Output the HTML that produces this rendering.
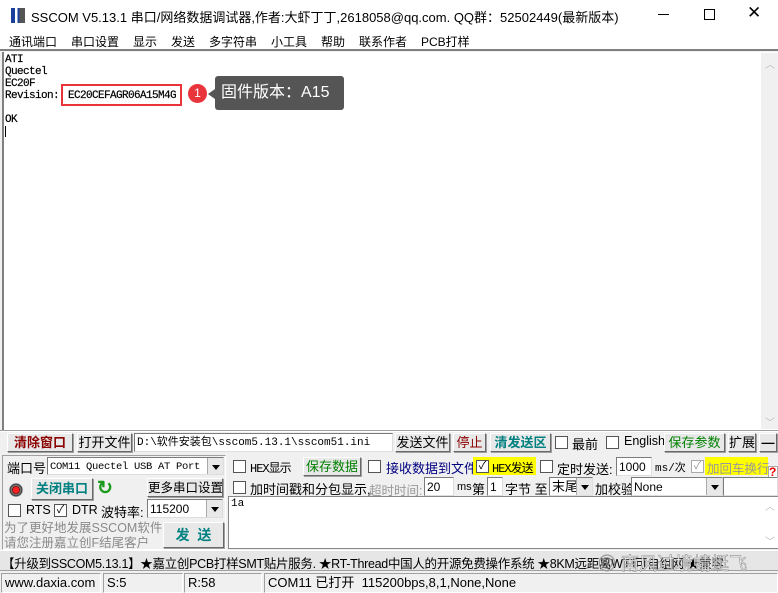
<!DOCTYPE html>
<html><head><meta charset="utf-8">
<style>
*{box-sizing:border-box;margin:0;padding:0}
body{width:778px;height:593px;background:#f0f0f0;position:relative;overflow:hidden;font-family:"Liberation Sans","Noto Sans CJK SC",sans-serif;font-size:12px;color:#000}
.a{position:absolute;white-space:nowrap}
.btn{position:absolute;background:#e8e8e8;border:1px solid #fff;border-right-color:#696969;border-bottom-color:#696969;box-shadow:1px 1px 0 #a0a0a0;text-align:center;font-size:13px;line-height:18px;white-space:nowrap;overflow:hidden}
.in{position:absolute;background:#fff;border:1px solid #7a7a7a;border-right-color:#ddd;border-bottom-color:#ddd;font-size:12px;line-height:18px;padding-left:2px;white-space:nowrap;overflow:hidden}
.cb{position:absolute;width:13px;height:13px;background:#fff;border:1px solid #555;font-size:11px;line-height:10px;text-align:center}
.dd{position:absolute;width:16px;background:#e8e8e8;border-left:1px solid #aaa;right:0;top:0;bottom:0}
.dd:after{content:"";position:absolute;left:4px;top:7px;border:4px solid transparent;border-top:5px solid #000}
.mono{font-family:"Liberation Mono","Noto Sans CJK SC",monospace}
.sb{position:absolute;background:#f0f0f0;border:1px solid #a0a0a0;border-right-color:#fff;border-bottom-color:#fff;font-size:13px;line-height:18px;padding-left:3px}
.m{position:absolute;top:33px;font-size:12px}
</style></head><body>
<div class="a" style="left:0;top:0;width:778px;height:30px;background:#fff"></div>
<div class="a" style="left:11px;top:8px;width:14px;height:15px;background:linear-gradient(90deg,#1a3f9c 0 30%,#fff 30% 45%,#1a3f9c 45% 60%,#555 60%)"></div>
<div class="a" style="left:31px;top:7px;font-size:13px">SSCOM V5.13.1 串口/网络数据调试器,作者:大虾丁丁,2618058@qq.com. QQ群：52502449(最新版本)</div>
<div class="a" style="left:658px;top:14px;width:11px;height:1px;background:#000"></div>
<div class="a" style="left:704px;top:9px;width:11px;height:11px;border:1px solid #000"></div>
<div class="a" style="left:747px;top:3px;font-size:17px">✕</div>
<div class="a" style="left:0;top:30px;width:778px;height:21px;background:#fff;border-bottom:2px solid #808080"></div>
<div class="m" style="left:9px">通讯端口</div><div class="m" style="left:71px">串口设置</div><div class="m" style="left:133px">显示</div><div class="m" style="left:171px">发送</div><div class="m" style="left:209px">多字符串</div><div class="m" style="left:271px">小工具</div><div class="m" style="left:321px">帮助</div><div class="m" style="left:359px">联系作者</div><div class="m" style="left:421px">PCB打样</div>
<div class="a" style="left:2px;top:52px;width:776px;height:378px;background:#fff;border-left:2px solid #808080"></div>
<div class="a" style="left:761px;top:53px;width:17px;height:376px;background:#f0f0f0"></div>
<div class="a" style="left:765px;top:56px;color:#bbb;font-size:10px">︿</div>
<div class="a" style="left:765px;top:414px;color:#bbb;font-size:10px">﹀</div>
<div class="a mono" style="left:5px;top:54px;font-size:11px;line-height:12px;letter-spacing:-0.6px;-webkit-text-stroke:0.2px #000">ATI<br>Quectel<br>EC20F<br>Revision: <span style="padding-left:3px">EC20CEFAGR06A15M4G</span><br><br>OK</div>
<div class="a" style="left:5px;top:126px;width:1px;height:11px;background:#000"></div>
<div class="a" style="left:61px;top:84px;width:121px;height:22px;border:2px solid #e8343a"></div>
<div class="a" style="left:188px;top:84px;width:19px;height:19px;border-radius:50%;background:#e8343a;color:#fff;font-size:12px;text-align:center;line-height:19px">1</div>
<div class="a" style="left:208px;top:89px;border:5px solid transparent;border-right:7px solid #555;border-left:0"></div>
<div class="a" style="left:215px;top:76px;width:129px;height:34px;background:#555;border-radius:3px;color:#fff;font-size:16px;line-height:34px;padding-left:6px">固件版本：A15</div>
<div class="a" style="left:0;top:430px;width:778px;height:2px;background:#fff;border-top:1px solid #a0a0a0"></div>
<div class="btn" style="left:7px;top:433px;width:66px;height:19px;color:#8b0000;font-weight:bold">清除窗口</div>
<div class="btn" style="left:77px;top:433px;width:55px;height:19px">打开文件</div>
<div class="in mono" style="left:134px;top:433px;width:259px;height:19px;font-size:11px">D:\软件安装包\sscom5.13.1\sscom51.ini</div>
<div class="btn" style="left:395px;top:433px;width:55px;height:19px">发送文件</div>
<div class="btn" style="left:453px;top:433px;width:33px;height:19px;color:#8b0000">停止</div>
<div class="btn" style="left:490px;top:433px;width:61px;height:19px;color:#008080;font-weight:bold">清发送区</div>
<div class="cb" style="left:555px;top:436px"></div><div class="a" style="left:572px;top:434px;font-size:13px">最前</div>
<div class="cb" style="left:606px;top:436px"></div><div class="a" style="left:624px;top:434px;font-size:12.5px">English</div>
<div class="btn" style="left:664px;top:433px;width:61px;height:19px;color:#008000">保存参数</div>
<div class="btn" style="left:728px;top:433px;width:28px;height:19px">扩展</div>
<div class="btn" style="left:759px;top:433px;width:18px;height:19px;font-weight:bold">—</div>
<div class="a" style="left:2px;top:455px;width:224px;height:95px;border:1px solid #a0a0a0;border-right-color:#fff;border-bottom-color:#fff"></div>
<div class="a" style="left:7px;top:458px;font-size:13px">端口号</div>
<div class="in mono" style="left:47px;top:457px;width:177px;height:18px;font-size:10.5px;letter-spacing:-0.3px">COM11 Quectel USB AT Port<div class="dd"></div></div>
<div class="a" style="left:9px;top:483px;width:14px;height:14px;border-radius:50%;background:radial-gradient(#ff2020 0 30%,#600 35%,#888 45%,#333 60%,#ccc 70%)"></div>
<div class="btn" style="left:31px;top:478px;width:62px;height:22px;color:#008080;font-weight:bold;line-height:20px">关闭串口</div>
<div class="a" style="left:97px;top:477px;color:#1a9a1a;font-size:19px;font-weight:bold">↻</div>
<div class="btn" style="left:147px;top:478px;width:76px;height:19px;font-size:12.5px">更多串口设置</div>
<div class="cb" style="left:8px;top:504px"></div><div class="a" style="left:26px;top:503px;font-size:12.5px">RTS</div>
<div class="cb" style="left:54px;top:504px">✓</div><div class="a" style="left:72px;top:503px;font-size:12.5px">DTR</div>
<div class="a" style="left:101px;top:502px;font-size:13px">波特率:</div>
<div class="in" style="left:147px;top:499px;width:76px;height:19px">115200<div class="dd"></div></div>
<div class="a" style="left:4px;top:521px;color:#8a8a8a;font-size:12.5px;line-height:15px">为了更好地发展SSCOM软件<br>请您注册嘉立创F结尾客户</div>
<div class="btn" style="left:163px;top:522px;width:61px;height:26px;color:#008080;font-weight:bold;line-height:24px;font-size:14px">发 &nbsp;送</div>
<div class="cb" style="left:233px;top:460px"></div><div class="a mono" style="left:250px;top:459px;font-size:12px;letter-spacing:-1px">HEX显示</div>
<div class="btn" style="left:303px;top:457px;width:58px;height:19px;color:#008000">保存数据</div>
<div class="cb" style="left:368px;top:460px"></div><div class="a" style="left:386px;top:458px;color:#000080;font-size:13px">接收数据到文件</div>
<div class="a" style="left:473px;top:457px;width:63px;height:18px;background:#ffff00"></div>
<div class="cb" style="left:476px;top:460px">✓</div><div class="a mono" style="left:492px;top:459px;font-size:12px;letter-spacing:-1px">HEX发送</div>
<div class="cb" style="left:540px;top:460px"></div><div class="a" style="left:557px;top:459px;font-size:13px">定时发送:</div>
<div class="in" style="left:616px;top:457px;width:36px;height:19px">1000</div>
<div class="a mono" style="left:655px;top:459px;font-size:11px">ms/次</div>
<div class="a" style="left:705px;top:457px;width:63px;height:18px;background:#ffff00"></div>
<div class="cb" style="left:691px;top:460px;color:#999;border-color:#aaa">✓</div><div class="a" style="left:707px;top:458px;color:#999;font-size:12.5px">加回车换行</div>
<div class="a" style="left:768px;top:466px;width:10px;height:12px;background:#fff;border:1px solid #aaa"></div>
<div class="a" style="left:769px;top:465px;color:#e00;font-weight:bold;font-size:12px">?</div>
<div class="cb" style="left:233px;top:481px"></div><div class="a" style="left:250px;top:479px;font-size:13px">加时间戳和分包显示,</div>
<div class="a" style="left:369px;top:480px;color:#999;font-size:12.5px">超时时间:</div>
<div class="in" style="left:424px;top:477px;width:30px;height:19px">20</div>
<div class="a" style="left:457px;top:481px;font-size:11px">ms</div>
<div class="a" style="left:472px;top:479px;font-size:13px">第</div>
<div class="in" style="left:487px;top:477px;width:16px;height:19px">1</div>
<div class="a" style="left:505px;top:479px;font-size:13px">字节 至</div>
<div class="in" style="left:549px;top:477px;width:44px;height:19px;font-size:13px">末尾<div class="dd"></div></div>
<div class="a" style="left:595px;top:479px;font-size:13px">加校验</div>
<div class="in" style="left:631px;top:477px;width:92px;height:19px">None<div class="dd"></div></div>
<div class="in" style="left:723px;top:477px;width:55px;height:19px"></div>
<div class="a" style="left:228px;top:496px;width:550px;height:53px;background:#fff;border:1px solid #888;border-right:none"></div>
<div class="a mono" style="left:231px;top:498px;font-size:11px">1a</div>
<div class="a" style="left:765px;top:498px;color:#bbb;font-size:10px">︿</div>
<div class="a" style="left:765px;top:533px;color:#bbb;font-size:10px">﹀</div>
<div class="a" style="left:0;top:550px;width:778px;height:21px;border-top:1px solid #fff;border-bottom:1px solid #a0a0a0;background:#e6e6e6"></div>
<div class="a" style="left:2px;top:553px;font-size:12.5px;letter-spacing:-0.3px">【升级到SSCOM5.13.1】★嘉立创PCB打样SMT贴片服务. ★RT-Thread中国人的开源免费操作系统 ★8KM远距离WiFi可自组网 ★兼容</div>
<div class="a" style="left:598px;top:550px;font-size:18px;color:#fff;-webkit-text-stroke:0.6px #888;opacity:.9">◎ 南风过境蜻蜓飞</div>
<div class="sb" style="left:1px;top:573px;width:100px;height:20px">www.daxia.com</div>
<div class="sb" style="left:103px;top:573px;width:80px;height:20px">S:5</div>
<div class="sb" style="left:184px;top:573px;width:78px;height:20px">R:58</div>
<div class="sb" style="left:264px;top:573px;width:514px;height:20px">COM11 已打开&nbsp; 115200bps,8,1,None,None</div>
</body></html>
